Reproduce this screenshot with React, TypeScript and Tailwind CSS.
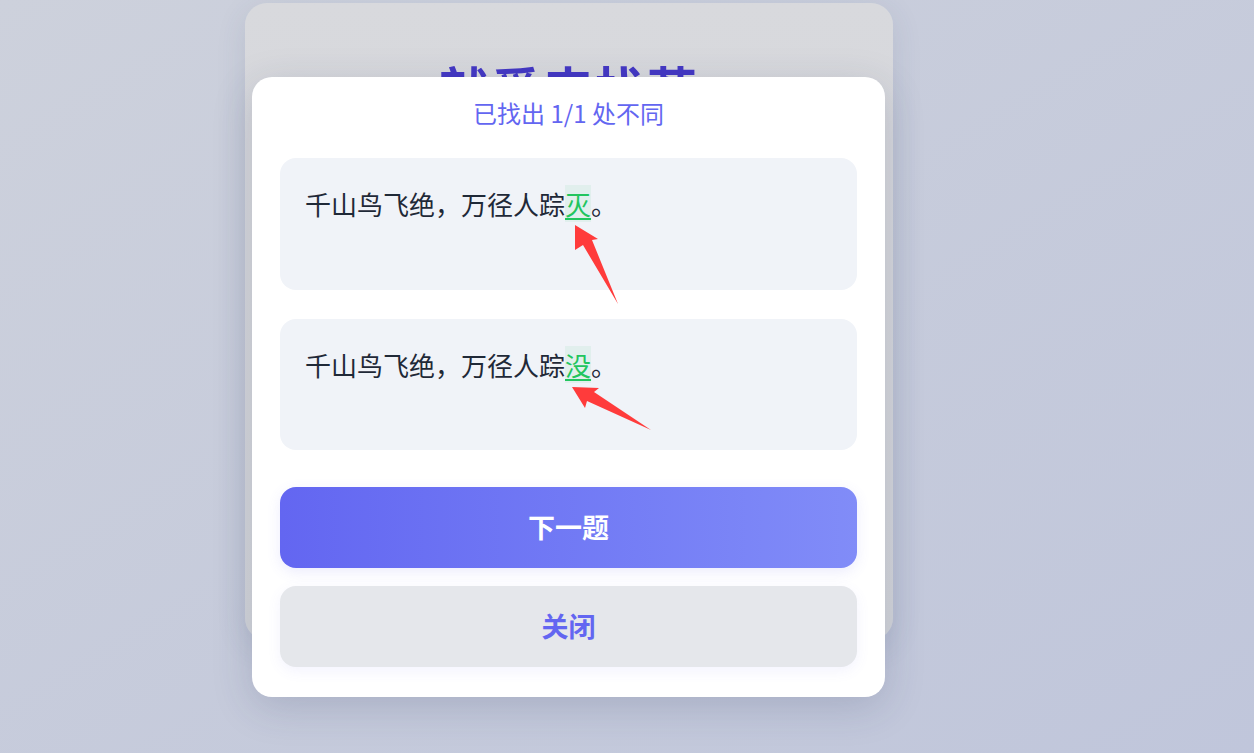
const font = "font-['Noto_Sans_CJK_SC','Noto_Sans',sans-serif]"

function Line({ word }: { word: string }) {
  return (
    <p className="text-[26px] leading-9 text-[#1f2937]">
      千山鸟飞绝，万径人踪
      <span className="bg-[#22c55e]/[0.07] text-[#22c55e] underline decoration-2 underline-offset-[3px]">
        {word}
      </span>
      。
    </p>
  )
}

function Arrows() {
  return (
    <svg
      className="pointer-events-none absolute left-0 top-0"
      width="1254"
      height="753"
      viewBox="0 0 1254 753"
    >
      <polygon
        points="575,225 598,239 592,240 618,304 583,245 575,250"
        fill="#ff3b3b"
      />
      <polygon
        points="572,387 599,388 594,392 651,430 587,401 585,408"
        fill="#ff3b3b"
      />
    </svg>
  )
}

export default function App() {
  return (
    <div
      className={`relative h-[753px] w-[1254px] overflow-hidden bg-gradient-to-br from-[#cdd1dc] to-[#c0c6db] ${font}`}
    >
      <div className="ml-[245px] mt-[3px] h-[637px] w-[648px] rounded-[22px] bg-gradient-to-b from-[#d8d9dd] to-[#d3d5da] shadow-[0_8px_30px_rgba(60,70,110,0.12)]">
        <h1 className="pt-[54px] text-center text-[50px] font-bold leading-[60px] tracking-[2px] text-[#4438c4]">
          就爱来找茬
        </h1>
      </div>

      <div className="absolute left-[252px] top-[77px] flex w-[633px] flex-col rounded-[20px] bg-white px-7 pb-[30px] pt-[22px] shadow-[0_10px_40px_rgba(40,50,90,0.18)]">
        <h2 className="text-center text-[24px] leading-[28px] text-[#6366f1]">
          已找出 1/1 处不同
        </h2>

        <div className="mt-[31px] h-[132px] rounded-2xl bg-[#f0f3f8] px-[25px] pt-[28px]">
          <Line word="灭" />
        </div>
        <div className="mt-[29px] h-[131px] rounded-2xl bg-[#f0f3f8] px-[25px] pt-[28px]">
          <Line word="没" />
        </div>

        <button
          type="button"
          className="mt-[37px] h-[81px] rounded-2xl bg-gradient-to-r from-[#6366f1] to-[#818cf8] text-[27px] font-bold text-white shadow-[0_4px_14px_rgba(99,102,241,0.12)]"
        >
          下一题
        </button>
        <button
          type="button"
          className="mt-[18px] h-[81px] rounded-2xl bg-[#e5e7eb] text-[27px] font-bold text-[#6366f1] shadow-[0_4px_14px_rgba(99,102,241,0.08)]"
        >
          关闭
        </button>
      </div>

      <Arrows />
    </div>
  )
}
